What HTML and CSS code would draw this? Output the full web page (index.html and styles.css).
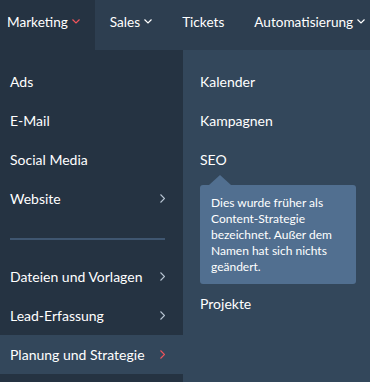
FILE: index.html
```html
<!DOCTYPE html>
<html lang="de">
  <head>
    <meta charset="UTF-8" />
    <meta name="viewport" content="width=device-width, initial-scale=1.0" />
    <title>Marketing Menü</title>
    <link rel="stylesheet" href="styles.css">
  </head>
  <body>
    <nav class="topbar">
      <div class="tab active">
        <span>Marketing</span>
        <svg class="caret" width="8" height="5" viewBox="0 0 8 5"><path d="M0.5 0.5 L4 4 L7.5 0.5" /></svg>
      </div>
      <div class="tab">
        <span>Sales</span>
        <svg class="caret" width="8" height="5" viewBox="0 0 8 5"><path d="M0.5 0.5 L4 4 L7.5 0.5" /></svg>
      </div>
      <div class="tab">
        <span>Tickets</span>
      </div>
      <div class="tab">
        <span>Automatisierung</span>
        <svg class="caret" width="8" height="5" viewBox="0 0 8 5"><path d="M0.5 0.5 L4 4 L7.5 0.5" /></svg>
      </div>
    </nav>

    <div class="dropdown">
      <ul class="menu-left">
        <li class="item">Ads</li>
        <li class="item">E-Mail</li>
        <li class="item">Social Media</li>
        <li class="item has-sub">
          <span>Website</span>
          <svg class="chev" width="5" height="9" viewBox="0 0 5 9"><path d="M0.5 0.5 L4.5 4.5 L0.5 8.5" /></svg>
        </li>
        <li class="divider"></li>
        <li class="item has-sub">
          <span>Dateien und Vorlagen</span>
          <svg class="chev" width="5" height="9" viewBox="0 0 5 9"><path d="M0.5 0.5 L4.5 4.5 L0.5 8.5" /></svg>
        </li>
        <li class="item has-sub">
          <span>Lead-Erfassung</span>
          <svg class="chev" width="5" height="9" viewBox="0 0 5 9"><path d="M0.5 0.5 L4.5 4.5 L0.5 8.5" /></svg>
        </li>
        <li class="item has-sub selected">
          <span>Planung und Strategie</span>
          <svg class="chev" width="5" height="9" viewBox="0 0 5 9"><path d="M0.5 0.5 L4.5 4.5 L0.5 8.5" /></svg>
        </li>
      </ul>

      <ul class="menu-right">
        <li class="item">Kalender</li>
        <li class="item">Kampagnen</li>
        <li class="item">SEO</li>
        <li class="tooltip">
          Dies wurde früher als Content-Strategie bezeichnet. Außer dem Namen hat sich nichts geändert.
        </li>
        <li class="item">Projekte</li>
      </ul>
    </div>
  </body>
</html>
```

FILE: styles.css
```css
body {
  margin: 0;
  padding: 0;
  width: 370px;
  height: 382px;
  overflow: hidden;
  background: #33475b;
  font-family: Lato, "Noto Sans", sans-serif;
  font-size: 14px;
  color: #fff;
}

ul {
  list-style: none;
  margin: 0;
  padding: 0;
}

.topbar {
  display: flex;
  height: 50px;
  overflow: hidden;
  background: #2d3e50;
  white-space: nowrap;
  font-size: 13.6px;
}

.tab {
  display: flex;
  flex-shrink: 0;
  align-items: center;
  gap: 4px;
  height: 43px;
  padding: 0 15px 7px;
  line-height: 20px;
}

.tab.active {
  margin-left: -8px;
  background: #253342;
}

.caret {
  fill: none;
  stroke: #fff;
  stroke-width: 1.2;
}

.tab.active .caret {
  stroke: #f2545b;
}

.dropdown {
  display: flex;
  height: 332px;
}

.menu-left {
  width: 183px;
  padding-top: 12px;
  background: #253342;
}

.menu-right {
  flex: 1;
  padding-top: 12px;
  padding-left: 17px;
}

.item {
  display: flex;
  align-items: center;
  justify-content: space-between;
  height: 39px;
  line-height: 20px;
}

.menu-left .item {
  padding: 0 18px 0 10px;
}

.menu-left .selected {
  background: #33475b;
}

.chev {
  fill: none;
  stroke: #b9c6d4;
  stroke-width: 1.1;
}

.selected .chev {
  stroke: #f2545b;
}

.divider {
  height: 2px;
  margin: 20px 18px 17px 10px;
  background: #3f5670;
}

.tooltip {
  position: relative;
  width: 134px;
  margin-top: 6px;
  padding: 10px 11px 9px;
  background: #516f90;
  border-radius: 3px;
  font-size: 12px;
  line-height: 16px;
}

.tooltip::before {
  content: "";
  position: absolute;
  top: -10px;
  left: 9px;
  border-left: 11px solid transparent;
  border-right: 11px solid transparent;
  border-bottom: 10px solid #516f90;
}
```
